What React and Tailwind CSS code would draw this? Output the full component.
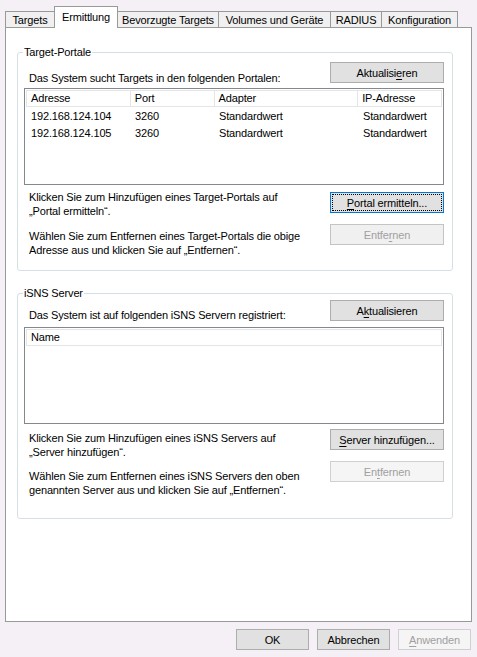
import React from "react";
import clsx from "clsx";

const tabs = [
  { label: "Targets", w: "w-[49px]", cls: "border-l" },
  { label: "Ermittlung", w: "w-[64px]", active: true },
  { label: "Bevorzugte Targets", w: "w-[101px]", cls: "border-r" },
  { label: "Volumes und Geräte", w: "w-[112px]", cls: "border-r" },
  { label: "RADIUS", w: "w-[51px]", cls: "border-r" },
  { label: "Konfiguration", w: "w-[76px]", cls: "border-r" },
];

const Btn = ({ children, disabled, focused, className }) => (
  <button
    className={clsx(
      "h-[21px] w-[114px] shrink-0 flex items-center justify-center border leading-[14px]",
      disabled
        ? "border-[#c4c4c4] bg-[#f0f0f0] text-[#a0a0a0]"
        : focused
        ? "border-[#0078d7] bg-[#e1e1e1] p-[1px]"
        : "border-[#adadad] bg-[#e1e1e1]",
      className
    )}
  >
    {focused ? (
      <span className="flex-1 self-stretch flex items-center justify-center border border-dotted border-black">
        {children}
      </span>
    ) : (
      children
    )}
  </button>
);

const GroupBox = ({ title, className, children }) => (
  <fieldset
    className={clsx(
      "ml-[11px] w-[436px] border border-[#d5dfe5] rounded-[3px]",
      className
    )}
  >
    <legend className="ml-[5px] px-[1px] leading-[14px]">{title}</legend>
    {children}
  </fieldset>
);

const portalCols = [
  { name: "Adresse", w: "w-[104px]" },
  { name: "Port", w: "w-[84px]" },
  { name: "Adapter", w: "w-[144px]" },
  { name: "IP-Adresse", w: "w-[84px]" },
];

const portals = [
  ["192.168.124.104", "3260", "Standardwert", "Standardwert"],
  ["192.168.124.105", "3260", "Standardwert", "Standardwert"],
];

export default function App() {
  return (
    <div
      className="w-[477px] h-[657px] bg-[#f5f0f5] text-[11px] leading-[14px] tracking-[-0.15px] text-black"
      style={{ fontFamily: '"Liberation Sans", Arial, sans-serif' }}
    >
      {/* Tabs */}
      <div className="flex items-end pl-[5px] pt-[6px] h-[28px]">
        {tabs.map((t) =>
          t.active ? (
            <div
              key={t.label}
              className={clsx(
                t.w,
                "relative z-10 h-[22px] border border-b-0 border-[#999] bg-white flex justify-center pt-[3px]"
              )}
            >
              {t.label}
            </div>
          ) : (
            <div
              key={t.label}
              className={clsx(
                t.w,
                t.cls,
                "h-[16px] mb-px border-t border-[#999] bg-[#f0f0f0] flex justify-center items-center"
              )}
            >
              {t.label}
            </div>
          )
        )}
      </div>

      {/* Panel */}
      <div className="-mt-px ml-[5px] w-[467px] h-[595px] border border-[#999] bg-white pt-[17px]">
        <GroupBox title="Target-Portale">
          <div className="pr-[8px] pb-[13px]">
            <div className="flex justify-between h-[26px] mt-[3px]">
              <span className="ml-[11px] mt-[9px]">
                Das System sucht Targets in den folgenden Portalen:
              </span>
              <Btn>
                Aktualisi<u className="underline-offset-2">e</u>ren
              </Btn>
            </div>

            <div className="ml-[6px] w-[420px] h-[97px] border border-[#828790] bg-white p-[1px]">
              <div className="flex h-[17px] border-t border-l border-[#e5e5e5]">
                {portalCols.map((c) => (
                  <div
                    key={c.name}
                    className={clsx(
                      c.w,
                      "border-r border-b border-[#e5e5e5] pl-[4px] leading-[15px]"
                    )}
                  >
                    {c.name}
                  </div>
                ))}
              </div>
              {portals.map((row) => (
                <div key={row[0]} className="flex h-[17px] items-center">
                  {row.map((v, i) => (
                    <div key={i} className={clsx(portalCols[i].w, "pl-[5px]")}>
                      {v}
                    </div>
                  ))}
                </div>
              ))}
            </div>

            <div className="flex justify-between mt-[5px]">
              <p className="ml-[11px] w-[290px]">
                Klicken Sie zum Hinzufügen eines Target-Portals auf
                <br />
                „Portal ermitteln“.
              </p>
              <Btn focused className="mt-[2px]">
                <u className="underline-offset-2">P</u>ortal ermitteln...
              </Btn>
            </div>

            <div className="flex justify-between mt-[6px]">
              <p className="ml-[11px] w-[290px] mt-[5px]">
                Wählen Sie zum Entfernen eines Target-Portals die obige
                <br />
                Adresse aus und klicken Sie auf „Entfernen“.
              </p>
              <Btn disabled>
                Entfe<u className="underline-offset-2">r</u>nen
              </Btn>
            </div>
          </div>
        </GroupBox>

        <GroupBox title="iSNS Server" className="mt-[15px]">
          <div className="pr-[8px] pb-[21px]">
            <div className="flex justify-between h-[27px]">
              <span className="ml-[11px] mt-[8px]">
                Das System ist auf folgenden iSNS Servern registriert:
              </span>
              <Btn>
                A<u className="underline-offset-2">k</u>tualisieren
              </Btn>
            </div>

            <div className="ml-[6px] w-[420px] h-[97px] border border-[#828790] bg-white p-[1px]">
              <div className="h-[17px] border border-[#e5e5e5] pl-[4px] leading-[15px]">
                Name
              </div>
            </div>

            <div className="flex justify-between mt-[5px]">
              <p className="ml-[11px] w-[290px] mt-[2px]">
                Klicken Sie zum Hinzufügen eines iSNS Servers auf
                <br />
                „Server hinzufügen“.
              </p>
              <Btn>
                <u className="underline-offset-2">S</u>erver hinzufügen...
              </Btn>
            </div>

            <div className="flex justify-between mt-[2px]">
              <p className="ml-[11px] w-[290px] mt-[8px]">
                Wählen Sie zum Entfernen eines iSNS Servers den oben
                <br />
                genannten Server aus und klicken Sie auf „Entfernen“.
              </p>
              <Btn disabled className="border-[#d0d0d0] bg-[#f5f5f5]">
                En<u className="underline-offset-2">t</u>fernen
              </Btn>
            </div>
          </div>
        </GroupBox>
      </div>

      {/* Dialog buttons */}
      <div className="flex justify-end gap-[8px] pr-[6px] mt-[7px]">
        <button className="w-[73px] h-[21px] border border-[#adadad] bg-[#e1e1e1]">
          OK
        </button>
        <button className="w-[73px] h-[21px] border border-[#adadad] bg-[#e1e1e1]">
          Abbrechen
        </button>
        <button className="w-[73px] h-[21px] border border-[#d0d0d0] bg-[#f5f5f5] text-[#a0a0a0]">
          <u className="underline-offset-2">A</u>nwenden
        </button>
      </div>
    </div>
  );
}
